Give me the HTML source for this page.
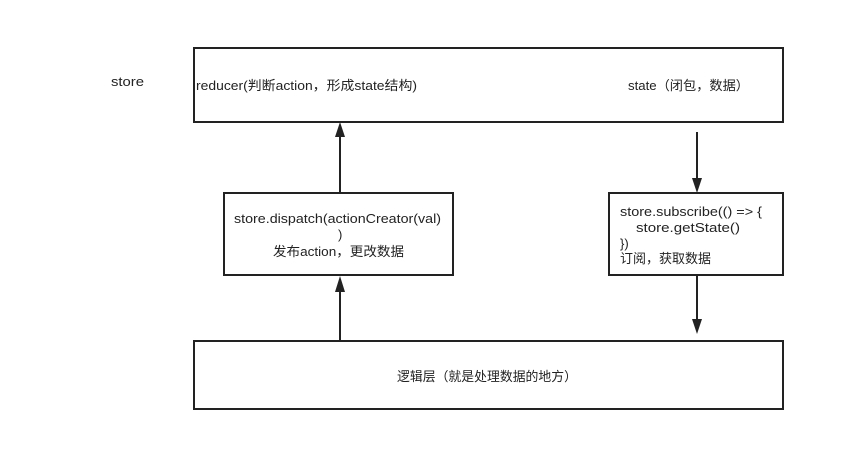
<!DOCTYPE html>
<html><head><style>
body{margin:0;background:#fff;width:845px;height:471px;overflow:hidden}
svg text{font-family:"Liberation Sans","Noto Sans CJK SC",sans-serif;font-size:13px;fill:#222}
</style></head><body>
<svg width="845" height="471" xmlns="http://www.w3.org/2000/svg">
<g fill="none" stroke="#222" stroke-width="2">
<rect x="194" y="48" width="589" height="74"/>
<rect x="224" y="193" width="229" height="82"/>
<rect x="609" y="193" width="174" height="82"/>
<rect x="194" y="341" width="589" height="68"/>
<line x1="340" y1="193" x2="340" y2="135"/>
<line x1="697" y1="132" x2="697" y2="180"/>
<line x1="340" y1="341" x2="340" y2="290"/>
<line x1="697" y1="275" x2="697" y2="322"/>
</g>
<g fill="#222">
<polygon points="340,122 335,137 345,137"/>
<polygon points="697,193 692,178 702,178"/>
<polygon points="340,276 335,292 345,292"/>
<polygon points="697,334 692,319 702,319"/>
</g>
<text x="111" y="86" textLength="33" lengthAdjust="spacingAndGlyphs">store</text>
<text x="196" y="90" textLength="221" lengthAdjust="spacingAndGlyphs">reducer(判断action，形成state结构)</text>
<text x="628" y="90" textLength="121" lengthAdjust="spacingAndGlyphs">state（闭包，数据）</text>
<text x="234" y="223" textLength="207" lengthAdjust="spacingAndGlyphs">store.dispatch(actionCreator(val)</text>
<text x="338" y="239">)</text>
<text x="273" y="256" textLength="131" lengthAdjust="spacingAndGlyphs">发布action，更改数据</text>
<text x="620" y="216" textLength="142" lengthAdjust="spacingAndGlyphs">store.subscribe(() =&gt; {</text>
<text x="636" y="232" textLength="104" lengthAdjust="spacingAndGlyphs">store.getState()</text>
<text x="620" y="248">})</text>
<text x="620" y="263" textLength="91" lengthAdjust="spacingAndGlyphs">订阅，获取数据</text>
<text x="397" y="381" textLength="180" lengthAdjust="spacingAndGlyphs">逻辑层（就是处理数据的地方）</text>
</svg>
</body></html>
